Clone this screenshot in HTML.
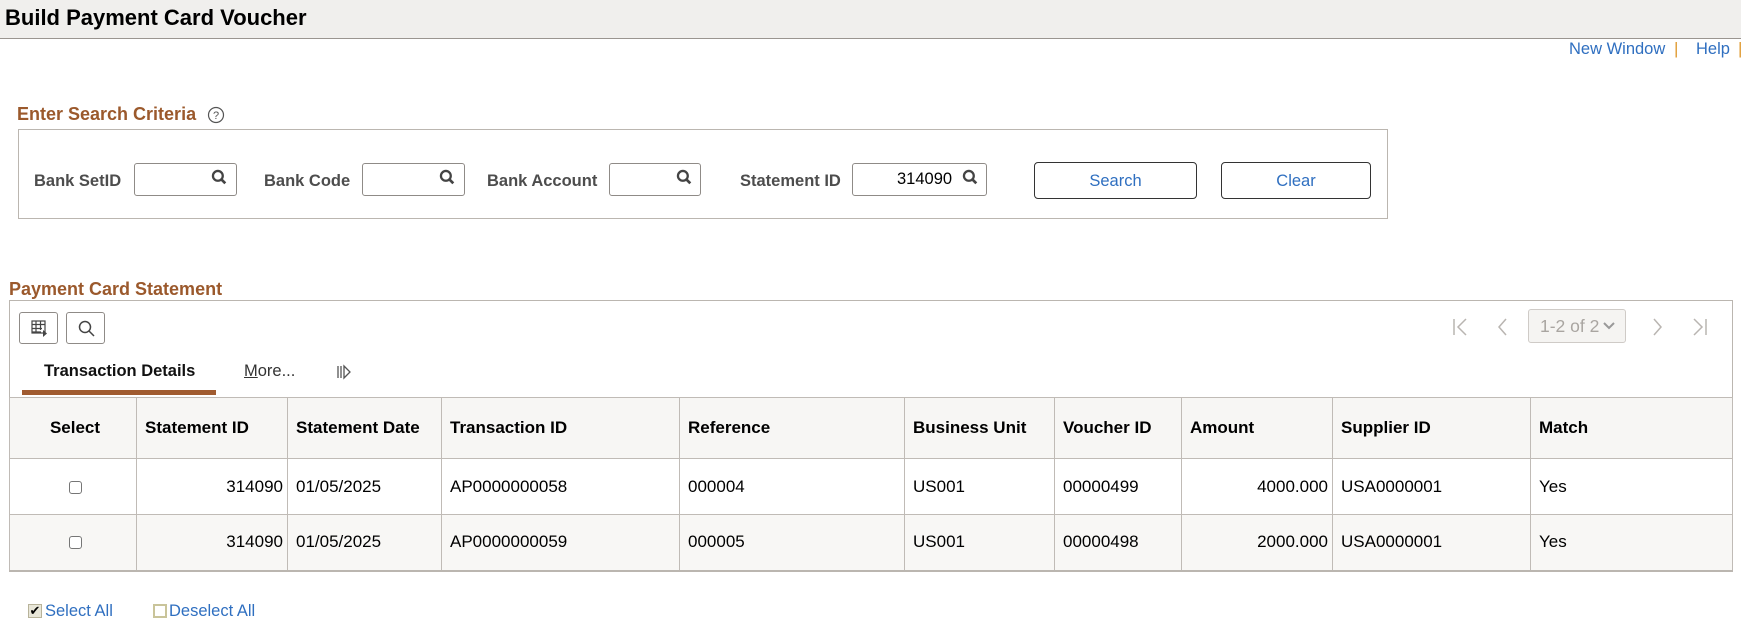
<!DOCTYPE html>
<html><head><meta charset="utf-8"><style>
*{box-sizing:border-box;margin:0;padding:0}
body{width:1741px;height:634px;background:#fff;font-family:"Liberation Sans",Arial,sans-serif;position:relative;overflow:hidden;color:#000}
.a{position:absolute}
.tb{left:0;top:0;width:1741px;height:39px;background:#f0efed;border-bottom:1px solid #9a9590}
.title{left:5px;top:5px;font-size:22px;font-weight:bold;color:#000}
.lnk{color:#2f6fc0;font-size:16.5px}
.h{color:#9b592c;font-weight:bold;font-size:18px}
.lbl{color:#4d4d4d;font-weight:bold;font-size:16.5px}
.inp{border:1px solid #8f8b87;border-radius:3px;height:33px;background:#fff}
.btn{border:1px solid #333;border-radius:4px;background:#fff;color:#2f6fc0;font-size:16.5px;text-align:center;line-height:36px}
.tbtn{border:1px solid #8f8b87;border-radius:3px;width:39px;height:32px;top:312px;background:#fff}
table{border-collapse:collapse;position:absolute;left:9px;top:397px;width:1724px;font-size:17px}
td,th{border:1px solid #c0bbb6;padding:0 4px 0 8px}
th{background:#f7f6f4;height:61px;text-align:left;font-weight:bold;color:#000}
td{height:56px}
tr.r2 td{background:#f8f7f5}
tr:last-child td{border-bottom:2px solid #bbb6b0}
.cb{width:13px;height:13px;border:1px solid #767676;border-radius:3px;display:inline-block;background:#fff;vertical-align:middle}
</style></head><body>
<div class="a tb"></div>
<div class="a title">Build Payment Card Voucher</div>
<div class="a lnk" style="left:1569px;top:40px">New Window</div>
<div class="a" style="left:1674px;top:39px;color:#e09a30;font-size:17px">|</div>
<div class="a lnk" style="left:1696px;top:40px">Help</div>
<div class="a" style="left:1738px;top:39px;color:#e09a30;font-size:17px">|</div>

<div class="a h" style="left:17px;top:104px">Enter Search Criteria</div>
<svg class="a" style="left:207px;top:106px" width="18" height="18" viewBox="0 0 18 18"><circle cx="9" cy="9" r="7.5" fill="none" stroke="#555" stroke-width="1.2"/><text x="9" y="13" font-size="11" text-anchor="middle" fill="#555" font-family="Liberation Sans">?</text></svg>
<div class="a" style="left:18px;top:129px;width:1370px;height:90px;border:1px solid #bbb6b0"></div>

<div class="a lbl" style="left:34px;top:172px">Bank SetID</div>
<div class="a inp" style="left:134px;top:163px;width:103px"></div>
<div class="a lbl" style="left:264px;top:172px">Bank Code</div>
<div class="a inp" style="left:362px;top:163px;width:103px"></div>
<div class="a lbl" style="left:487px;top:172px">Bank Account</div>
<div class="a inp" style="left:609px;top:163px;width:92px"></div>
<div class="a lbl" style="left:740px;top:172px">Statement ID</div>
<div class="a inp" style="left:852px;top:163px;width:135px"></div>
<div class="a" style="left:897px;top:170px;font-size:16.5px">314090</div>
<svg class="a" style="left:211px;top:169px" width="16" height="16" viewBox="0 0 14 14"><circle cx="6" cy="6" r="4.3" fill="none" stroke="#444" stroke-width="2"/><path d="M9 9l3.5 3.5" stroke="#444" stroke-width="2.4"/></svg>
<svg class="a" style="left:439px;top:169px" width="16" height="16" viewBox="0 0 14 14"><circle cx="6" cy="6" r="4.3" fill="none" stroke="#444" stroke-width="2"/><path d="M9 9l3.5 3.5" stroke="#444" stroke-width="2.4"/></svg>
<svg class="a" style="left:676px;top:169px" width="16" height="16" viewBox="0 0 14 14"><circle cx="6" cy="6" r="4.3" fill="none" stroke="#444" stroke-width="2"/><path d="M9 9l3.5 3.5" stroke="#444" stroke-width="2.4"/></svg>
<svg class="a" style="left:962px;top:169px" width="16" height="16" viewBox="0 0 14 14"><circle cx="6" cy="6" r="4.3" fill="none" stroke="#444" stroke-width="2"/><path d="M9 9l3.5 3.5" stroke="#444" stroke-width="2.4"/></svg>
<div class="a btn" style="left:1034px;top:162px;width:163px;height:37px">Search</div>
<div class="a btn" style="left:1221px;top:162px;width:150px;height:37px">Clear</div>

<div class="a h" style="left:9px;top:279px">Payment Card Statement</div>
<div class="a" style="left:9px;top:300px;width:1724px;height:270px;border:1px solid #bbb6b0"></div>
<div class="a tbtn" style="left:19px"><svg style="position:absolute;left:11px;top:7px" width="18" height="18" viewBox="0 0 18 18" fill="none" stroke="#444" stroke-width="1.2"><rect x="1" y="1" width="13" height="12"/><path d="M1 4.5h13M1 8.5h10M1 12h9M5 1v12M9.5 1v9"/><path d="M12 10l4 3.5-4 3.5z" fill="#444" stroke="none"/></svg></div>
<div class="a tbtn" style="left:66px"><svg style="position:absolute;left:10px;top:6px" width="19" height="19" viewBox="0 0 19 19" fill="none" stroke="#444" stroke-width="1.5"><circle cx="8" cy="8" r="5.5"/><path d="M12 12l5 5"/></svg></div>

<svg class="a" style="left:1440px;top:310px" width="300" height="34" viewBox="0 0 300 34" fill="none" stroke="#b9b5b1" stroke-width="1.5"><path d="M14 9v16M26 9l-8 8 8 8"/><path d="M66 9l-7 8 7 8"/><path d="M214 9l7 8-7 8"/><path d="M254 9l8 8-8 8M266 9v16"/></svg>
<div class="a" style="left:1528px;top:309px;width:98px;height:34px;border:1px solid #cfcbc7;border-radius:3px;background:#f5f4f2;color:#a9a5a1;font-size:17.5px;line-height:32px;padding-left:11px">1-2 of 2</div>
<svg class="a" style="left:1603px;top:322px" width="12" height="8" viewBox="0 0 12 8" fill="none" stroke="#999" stroke-width="2"><path d="M1 1l5 5 5-5"/></svg>

<div class="a" style="left:44px;top:362px;font-size:16.5px;font-weight:bold;color:#111">Transaction Details</div>
<div class="a" style="left:22px;top:390px;width:194px;height:5px;background:#a05b30"></div>
<div class="a" style="left:244px;top:362px;font-size:16.5px;color:#333"><u>M</u>ore...</div>
<svg class="a" style="left:336px;top:364px" width="16" height="16" viewBox="0 0 16 16" fill="none" stroke="#555" stroke-width="1.3"><path d="M2 2v12M5 2v12M8 2l6 6-6 6z"/></svg>

<table>
<tr><th style="width:127px;text-align:center">Select</th><th style="width:151px">Statement ID</th><th style="width:154px">Statement Date</th><th style="width:238px">Transaction ID</th><th style="width:225px">Reference</th><th style="width:150px">Business Unit</th><th style="width:127px">Voucher ID</th><th style="width:151px">Amount</th><th style="width:198px">Supplier ID</th><th>Match</th></tr>
<tr><td style="text-align:center"><span class="cb"></span></td><td style="text-align:right">314090</td><td>01/05/2025</td><td>AP0000000058</td><td>000004</td><td>US001</td><td>00000499</td><td style="text-align:right">4000.000</td><td>USA0000001</td><td>Yes</td></tr>
<tr class="r2"><td style="text-align:center"><span class="cb"></span></td><td style="text-align:right">314090</td><td>01/05/2025</td><td>AP0000000059</td><td>000005</td><td>US001</td><td>00000498</td><td style="text-align:right">2000.000</td><td>USA0000001</td><td>Yes</td></tr>
</table>

<div class="a" style="left:28px;top:604px;width:14px;height:14px;border:1px solid #b8b39a;background:#e8e6d8;font-size:13px;line-height:12px;text-align:center;color:#000">&#10004;</div>
<div class="a lnk" style="left:45px;top:602px">Select All</div>
<div class="a" style="left:153px;top:604px;width:14px;height:14px;border:2px solid #c9c49a;background:#fff"></div>
<div class="a lnk" style="left:169px;top:602px">Deselect All</div>
</body></html>
